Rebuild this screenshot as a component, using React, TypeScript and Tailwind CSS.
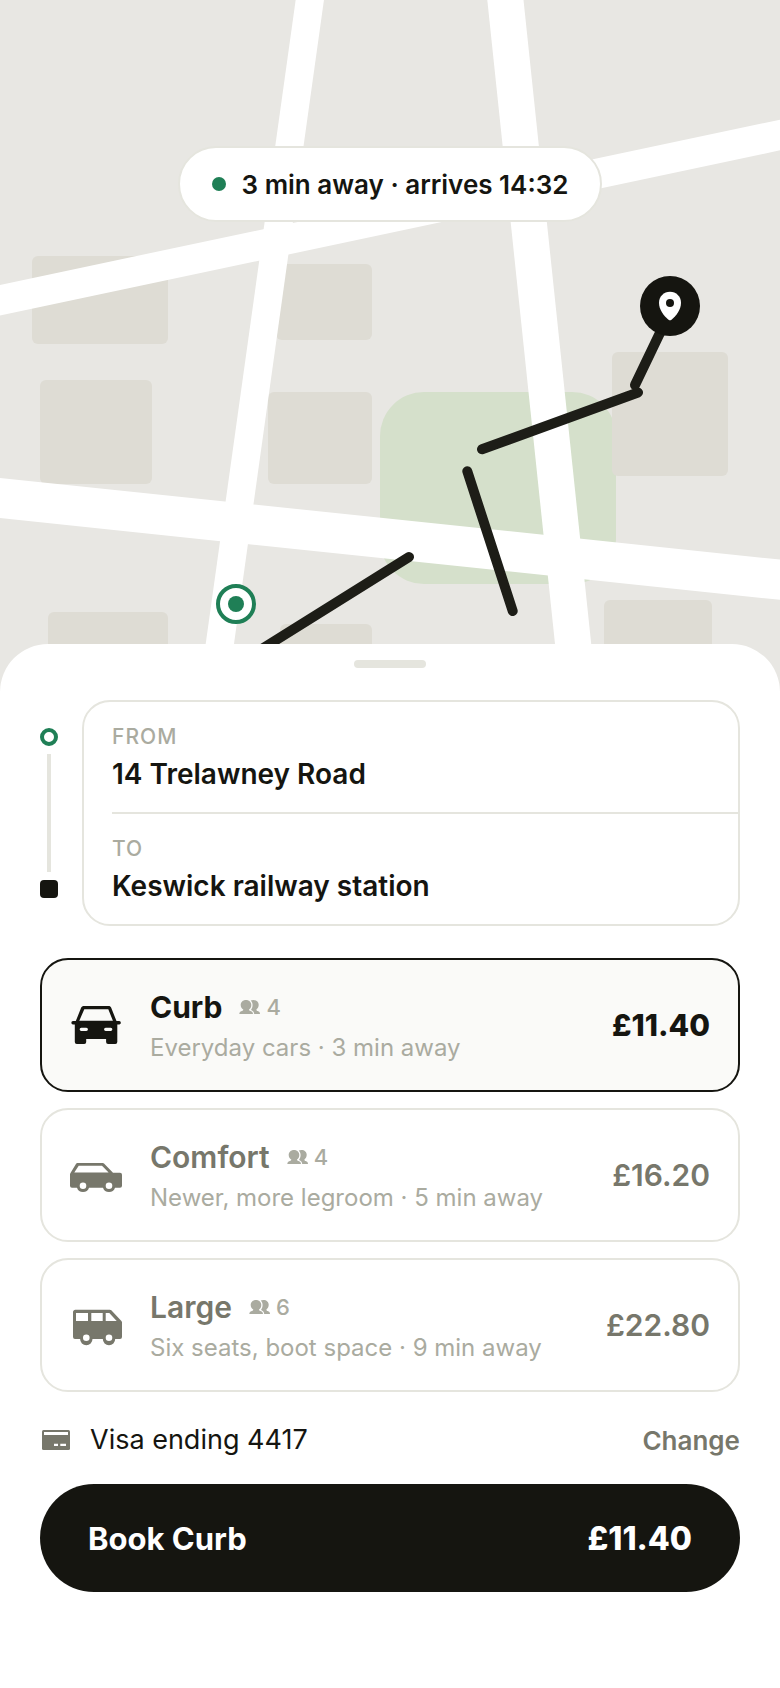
import React, { useState } from 'react';

interface Ride {
  id: string;
  name: string;
  seats: number;
  note: string;
  price: string;
  Icon: () => React.ReactElement;
}

function CarIcon() {
  return (
    <svg viewBox="0 0 52 52" className="h-13 w-13 shrink-0" fill="currentColor" fillRule="evenodd" aria-hidden="true">
      <path d="M14 7h24.6c1.2 0 2.2.6 2.6 1.8l5.3 13.3h2.7a1.6 1.6 0 0 1 0 3.3h-1.9v17.6a2 2 0 0 1-2 2h-7.2a2 2 0 0 1-2-2v-3H16.2v3a2 2 0 0 1-2 2H6.8a2 2 0 0 1-2-2V25.4H3a1.6 1.6 0 0 1 0-3.3h2.8l5.3-13.3C11.6 7.6 12.7 7 14 7zM14.3 10.300 9.300 21.700h33.600L38.300 10.300zM11.300 28.700a1.650 1.650 0 0 0 0 3.300h5a1.650 1.650 0 0 0 0-3.300zM35.700 28.700a1.650 1.650 0 0 0 0 3.300h5a1.650 1.650 0 0 0 0-3.300z" />
    </svg>
  );
}

function EstateIcon() {
  return (
    <svg viewBox="0 0 52 52" className="h-13 w-13 shrink-0" fill="currentColor" fillRule="evenodd" aria-hidden="true">
      <path d="M7.400 14h25.400c.5 0 .9.2 1.200.5l9 9.300h7a2 2 0 0 1 2 2v10.900a2 2 0 0 1-2 2h-5a6.300 6.300 0 0 1-12 0H19a6.300 6.300 0 0 1-12 0H2a2 2 0 0 1-2-2V25.500c0-.6.200-1.100.5-1.600l5.600-9.200c.3-.5.700-.7 1.300-.7zM8.700 16.700 4.300 23.600h34.300L32 16.700zM13 33.400a3.300 3.300 0 1 0 0 6.600 3.300 3.300 0 0 0 0-6.600zM39 33.400a3.300 3.300 0 1 0 0 6.600 3.300 3.300 0 0 0 0-6.600z" />
    </svg>
  );
}

function VanIcon() {
  return (
    <svg viewBox="0 0 52 52" className="h-13 w-13 shrink-0" fill="currentColor" fillRule="evenodd" aria-hidden="true">
      <path d="M5.300 10.700h34.500c.6 0 1.100.2 1.500.6l10.100 10.800c.4.4.6.9.6 1.500V38a2 2 0 0 1-2 2h-4.800a6.200 6.200 0 0 1-12.400 0H22.500a6.200 6.200 0 0 1-12.400 0H5a2 2 0 0 1-2-2V13c0-1.300 1-2.300 2.300-2.300zM6 14v8h12v-8zM21.300 14v8h11.400v-8zM35.700 14v8h11l-7.400-8zM16.300 35.400a3.300 3.300 0 1 0 0 6.600 3.300 3.300 0 0 0 0-6.600zM39 35.400a3.300 3.300 0 1 0 0 6.600 3.300 3.300 0 0 0 0-6.600z" />
    </svg>
  );
}

function PeopleIcon() {
  return (
    <svg viewBox="0 0 24 24" className="h-6 w-6 shrink-0" fill="currentColor" aria-hidden="true">
      <path d="M8 5c3.200 0 5.300 2.200 5.300 5 0 2-.9 3.500-2.300 4.500 0 .8.500 1.300 1.500 1.600 1.600.5 2.400 1.400 2.500 2.900H1.300c.1-1.500.9-2.400 2.500-2.900 1-.3 1.500-.8 1.500-1.600C3.800 13.500 2.700 12 2.700 10c0-2.800 2.100-5 5.300-5z" />
      <path d="M12.700 5.500c.8-.3 1.700-.5 2.700-.5 3.200 0 5.300 2.100 5.300 4.800 0 2-.9 3.700-2.300 4.600 0 .9.400 1.400 1.300 1.700 1.500.5 2.300 1.400 2.300 2.900h-5.800c-.1-1.700-.9-2.900-2.600-3.700-.4-.2-.6-.4-.4-.8.900-1.200 1.400-2.700 1.400-4.500 0-1.800-.7-3.400-1.900-4.500z" />
    </svg>
  );
}

function CardIcon() {
  return (
    <svg viewBox="0 0 32 32" className="h-8 w-8 shrink-0 text-[#77776b]" aria-hidden="true">
      <rect x="2" y="6" width="28" height="20" rx="1.500" fill="currentColor" />
      <path d="M4 8h24v3H4zM14 19.700h4v2.300h-4zM20.300 19.700H26v2.300h-5.700z" fill="#fff" />
    </svg>
  );
}

function CityMap() {
  return (
    <svg viewBox="0 0 780 700" preserveAspectRatio="xMidYMid slice" className="absolute inset-0 h-full w-full" role="img" aria-label="Route map">
      <rect x="380" y="392" width="236" height="192" rx="44" fill="#d5e0cb" />
      <g fill="#dedcd4">
        <rect x="32" y="256" width="136" height="88" rx="6" />
        <rect x="276" y="264" width="96" height="76" rx="6" />
        <rect x="40" y="380" width="112" height="104" rx="6" />
        <rect x="268" y="392" width="104" height="92" rx="6" />
        <rect x="48" y="612" width="120" height="90" rx="6" />
        <rect x="280" y="624" width="92" height="80" rx="6" />
        <rect x="612" y="352" width="116" height="124" rx="6" />
        <rect x="604" y="600" width="108" height="90" rx="6" />
      </g>
      {/* streets */}
      <g stroke="#fff">
        <path d="M312.600-20 212 700" strokeWidth="28" />
        <path d="M503.300-20 579 700" strokeWidth="36" />
        <path d="M-20 304.500 800 130.800" strokeWidth="30" />
        <path d="M-20 495.900 800 581.800" strokeWidth="40" />
      </g>
      {/* route */}
      <g stroke="#1d1d17" strokeWidth="10" strokeLinecap="round">
        <path d="M241 662 409 557" />
        <path d="M467.300 471.300 512.700 611" />
        <path d="M482 449.300 638 392.500" />
        <path d="M635 385 670 312" />
      </g>
      <circle cx="236" cy="604" r="18" fill="#fff" stroke="#1f7f56" strokeWidth="4" />
      <circle cx="236" cy="604" r="8" fill="#1f7f56" />
      <circle cx="670" cy="306" r="30" fill="#151510" />
      <path d="M670 291.700c6.200 0 11 4.700 11 11 0 6.600-4.600 13-9.800 17.200-.8.600-1.600.6-2.400 0-5.200-4.200-9.800-10.600-9.800-17.200 0-6.300 4.800-11 11-11z" fill="#fff" />
      <circle cx="670" cy="303" r="4" fill="#151510" />
    </svg>
  );
}

const rides: Ride[] = [
  { id: 'curb', name: 'Curb', seats: 4, note: 'Everyday cars · 3 min away', price: '£11.40', Icon: CarIcon },
  { id: 'comfort', name: 'Comfort', seats: 4, note: 'Newer, more legroom · 5 min away', price: '£16.20', Icon: EstateIcon },
  { id: 'large', name: 'Large', seats: 6, note: 'Six seats, boot space · 9 min away', price: '£22.80', Icon: VanIcon },
];

export default function App() {
  const [selectedId, setSelectedId] = useState('curb');
  const [from, setFrom] = useState('14 Trelawney Road');
  const [to, setTo] = useState('Keswick railway station');

  const selected = rides.find((ride) => ride.id === selectedId) ?? rides[0];

  return (
    <div className="min-h-screen bg-white font-['Inter',sans-serif] text-[#151510]">
      {/* Map */}
      <header className="relative flex h-[700px] justify-center overflow-hidden bg-[#e8e7e3] pt-[146px]">
        <CityMap />
        <div className="relative flex h-19 items-center gap-4 self-start rounded-full border-2 border-[#e5e5de] bg-white px-8 text-[26px] font-semibold">
          <span className="h-3.5 w-3.5 rounded-full bg-[#1f7f56]"></span>
          3 min away · arrives 14:32
        </div>
      </header>

      {/* Booking sheet */}
      <main className="relative -mt-14 rounded-t-[48px] bg-white px-10 pt-4 pb-24">
        <div className="mx-auto h-2 w-18 rounded-full bg-[#e5e5de]"></div>

        <section className="mt-8 flex gap-6">
          <div className="flex flex-col items-center gap-2 py-7">
            <span className="h-4.5 w-4.5 rounded-full border-4 border-[#1f7f56]"></span>
            <span className="w-1 flex-1 bg-[#e5e5de]"></span>
            <span className="h-4.5 w-4.5 rounded-sm bg-[#151510]"></span>
          </div>
          <div className="min-w-0 flex-1 rounded-[28px] border-2 border-[#e5e5de] pl-7">
            <div className="border-b-2 border-[#e5e5de] pt-5 pb-4">
              <label htmlFor="from" className="block text-[21px] leading-[30px] font-medium tracking-wider text-[#aaaba0]">FROM</label>
              <input
                id="from"
                value={from}
                onChange={(e) => setFrom(e.target.value)}
                className="block h-11 w-full bg-transparent text-[28px] font-semibold outline-none"
              />
            </div>
            <div className="pt-5 pb-4">
              <label htmlFor="to" className="block text-[21px] leading-[30px] font-medium tracking-wider text-[#aaaba0]">TO</label>
              <input
                id="to"
                value={to}
                onChange={(e) => setTo(e.target.value)}
                className="block h-11 w-full bg-transparent text-[28px] font-semibold outline-none"
              />
            </div>
          </div>
        </section>

        {/* Ride options */}
        <section className="mt-8 space-y-4">
          {rides.map((ride) => {
            const active = ride.id === selectedId;
            return (
              <label
                key={ride.id}
                className={`relative flex h-[134px] cursor-pointer items-center gap-7 rounded-[28px] border-2 px-7 ${
                  active ? 'border-[#151510] bg-[#fafaf8] text-[#151510]' : 'border-[#e5e5de] bg-white text-[#77776b]'
                }`}
              >
                <input
                  type="radio"
                  name="ride"
                  value={ride.id}
                  checked={active}
                  onChange={() => setSelectedId(ride.id)}
                  className="sr-only"
                />
                <ride.Icon />
                <span className="flex-1 pt-1.5">
                  <span className="flex items-center gap-4 text-[30px] leading-10">
                    <span className={active ? 'font-bold' : 'font-semibold'}>{ride.name}</span>
                    <span className="flex items-center gap-1 text-[22px] font-medium text-[#aaaba0]">
                      <PeopleIcon /> {ride.seats}
                    </span>
                  </span>
                  <span className="block text-2xl leading-[42px] text-[#aaaba0]">{ride.note}</span>
                </span>
                <span className={`text-[30px] ${active ? 'font-extrabold' : 'font-semibold'}`}>{ride.price}</span>
              </label>
            );
          })}
        </section>

        {/* Payment */}
        <div className="flex h-23 items-center gap-4.5 pt-1">
          <CardIcon />
          <span className="flex-1 text-[27px]">Visa ending 4417</span>
          <button className="cursor-pointer text-[26px] font-semibold text-[#77776b]">Change</button>
        </div>
        <button className="flex h-27 w-full cursor-pointer items-center justify-between rounded-full bg-[#151510] px-12 pt-0.5 text-[31px] font-bold text-white">
          <span>Book {selected.name}</span>
          <span className="text-[32px] font-extrabold">{selected.price}</span>
        </button>
      </main>
    </div>
  );
}
